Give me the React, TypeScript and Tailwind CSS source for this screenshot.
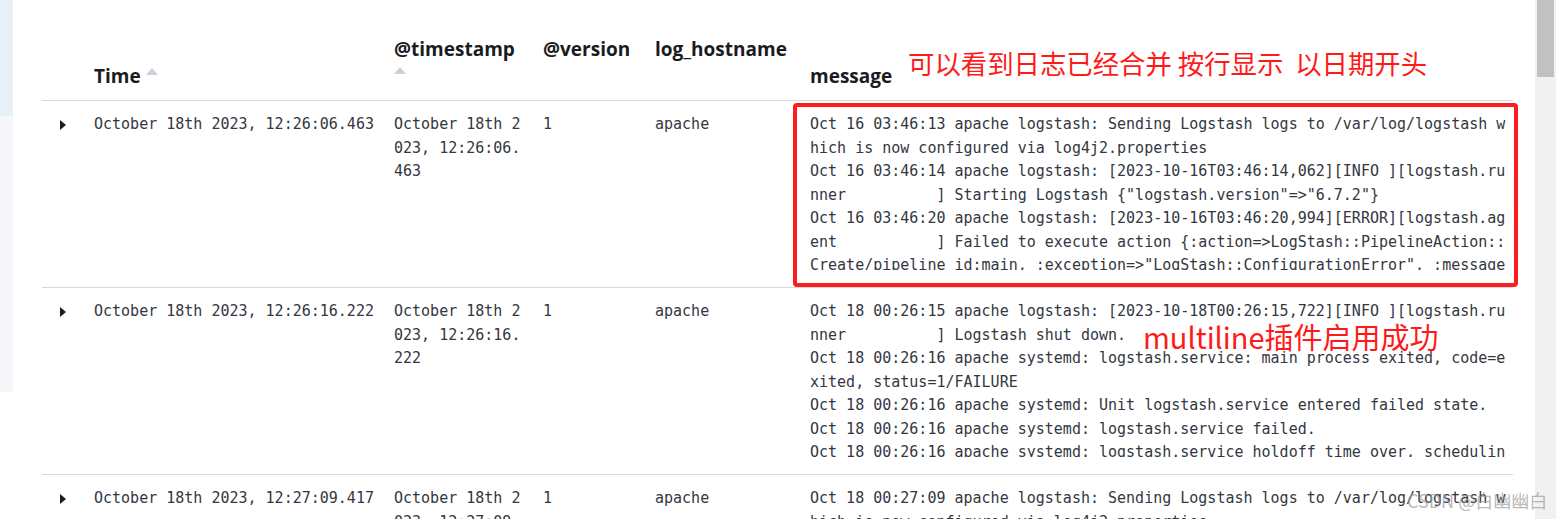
import React from 'react';

type Row = {
  time: string;
  timestamp: string;
  version: string;
  host: string;
  message: string;
};

const rows: Row[] = [
  {
    time: 'October 18th 2023, 12:26:06.463',
    timestamp: 'October 18th 2023, 12:26:06.463',
    version: '1',
    host: 'apache',
    message:
      'Oct 16 03:46:13 apache logstash: Sending Logstash logs to /var/log/logstash which is now configured via log4j2.properties\n' +
      'Oct 16 03:46:14 apache logstash: [2023-10-16T03:46:14,062][INFO ][logstash.runner          ] Starting Logstash {"logstash.version"=>"6.7.2"}\n' +
      'Oct 16 03:46:20 apache logstash: [2023-10-16T03:46:20,994][ERROR][logstash.agent           ] Failed to execute action {:action=>LogStash::PipelineAction::Create/pipeline_id:main, :exception=>"LogStash::ConfigurationError", :message=>"Expected one of #, input, filter, output at line 1, column 1 (byte 1) after "}',
  },
  {
    time: 'October 18th 2023, 12:26:16.222',
    timestamp: 'October 18th 2023, 12:26:16.222',
    version: '1',
    host: 'apache',
    message:
      'Oct 18 00:26:15 apache logstash: [2023-10-18T00:26:15,722][INFO ][logstash.runner          ] Logstash shut down.\n' +
      'Oct 18 00:26:16 apache systemd: logstash.service: main process exited, code=exited, status=1/FAILURE\n' +
      'Oct 18 00:26:16 apache systemd: Unit logstash.service entered failed state.\n' +
      'Oct 18 00:26:16 apache systemd: logstash.service failed.\n' +
      'Oct 18 00:26:16 apache systemd: logstash.service holdoff time over, scheduling restart.\n' +
      'Oct 18 00:26:16 apache systemd: Stopped logstash.',
  },
  {
    time: 'October 18th 2023, 12:27:09.417',
    timestamp: 'October 18th 2023, 12:27:09.417',
    version: '1',
    host: 'apache',
    message:
      'Oct 18 00:27:09 apache logstash: Sending Logstash logs to /var/log/logstash which is now configured via log4j2.properties\n' +
      'Oct 18 00:27:10 apache logstash: [2023-10-18T00:27:10,102][INFO ][logstash.runner          ] Starting Logstash {"logstash.version"=>"6.7.2"}',
  },
];

function SortArrow() {
  return (
    <svg width="12" height="7" viewBox="0 0 12 7" className="inline-block">
      <path d="M6 0 L12 7 L0 7 Z" fill="#c9d0dc" />
    </svg>
  );
}

function ToggleArrow() {
  return (
    <svg width="6" height="10" viewBox="0 0 6 10" className="inline-block">
      <path d="M0 0 L6 5 L0 10 Z" fill="#1a1c21" />
    </svg>
  );
}

function DocRow({ row }: { row: Row }) {
  return (
    <div className="flex items-start border-b border-[#d3dae6] pt-[12px] pb-[17px] font-['DejaVu_Sans_Mono',monospace] text-[15px] leading-[23.5px] text-[#343741]">
      <div className="w-[44px] shrink-0 pl-[18px]">
        <ToggleArrow />
      </div>
      <div className="w-[300px] shrink-0 px-2">{row.time}</div>
      <div className="w-[149px] shrink-0 px-2 break-all">{row.timestamp}</div>
      <div className="w-[112px] shrink-0 px-2">{row.version}</div>
      <div className="w-[155px] shrink-0 px-2">{row.host}</div>
      <div className="w-[711px] shrink-0 pl-2 pr-[4px]">
        <div className="max-h-[157px] overflow-hidden whitespace-pre-wrap break-all">{row.message}</div>
      </div>
    </div>
  );
}

export default function App() {
  return (
    <div className="relative flex h-[519px] w-full overflow-hidden bg-white">
      <div className="flex w-[13px] shrink-0 flex-col">
        <div className="h-[116px] bg-[#e6f0f8]" />
        <div className="h-[276px] bg-[#f5f7fa]" />
      </div>

      <div className="relative min-w-0 flex-1">
        <div className="ml-[29px] w-[1471px]">
          <div className="flex h-[101px] items-end border-b border-[#d3dae6] pb-[10px] font-['Open_Sans',sans-serif] text-[19px] font-bold leading-[27px] text-[#1a1c21]">
            <div className="w-[44px] shrink-0" />
            <div className="flex w-[300px] shrink-0 items-center gap-[5px] px-2">
              <span>Time</span>
              <span className="-mt-[10px] flex">
                <SortArrow />
              </span>
            </div>
            <div className="w-[149px] shrink-0 px-2">
              <div>@timestamp</div>
              <div className="flex h-[27px] items-center">
                <span className="-mt-[12px] flex">
                  <SortArrow />
                </span>
              </div>
            </div>
            <div className="w-[112px] shrink-0 px-2">
              <div>@version</div>
              <div className="h-[27px]" />
            </div>
            <div className="w-[155px] shrink-0 px-2">
              <div>log_hostname</div>
              <div className="h-[27px]" />
            </div>
            <div className="w-[711px] shrink-0 px-2">message</div>
          </div>

          {rows.map((row) => (
            <DocRow key={row.time} row={row} />
          ))}
        </div>

        {/* annotations */}
        <div className="absolute left-[780px] top-[103px] h-[184px] w-[725px] rounded-[4px] border-4 border-[#fd1d1d]" />
        <div className="absolute left-[895px] top-[50px] whitespace-pre font-['Noto_Sans_CJK_SC',sans-serif] text-[26.4px] leading-none text-[#ff1a1a]">
          可以看到日志已经合并 按行显示  以日期开头
        </div>
        <div className="absolute left-[1130px] top-[322px] whitespace-pre font-['Noto_Sans_CJK_SC',sans-serif] text-[29px] leading-none text-[#ff1a1a]">
          multiline插件启用成功
        </div>
      </div>

      <div className="w-[21px] shrink-0 bg-[#f1f1f1] px-[2px]">
        <div className="h-[77px] bg-[#c1c1c1]" />
      </div>

      <div className="absolute left-[1407px] top-[491px] font-['Noto_Sans_CJK_SC',sans-serif] text-[18px] leading-none text-[#9a9a9a]/70">
        CSDN @白幽幽白
      </div>
    </div>
  );
}
